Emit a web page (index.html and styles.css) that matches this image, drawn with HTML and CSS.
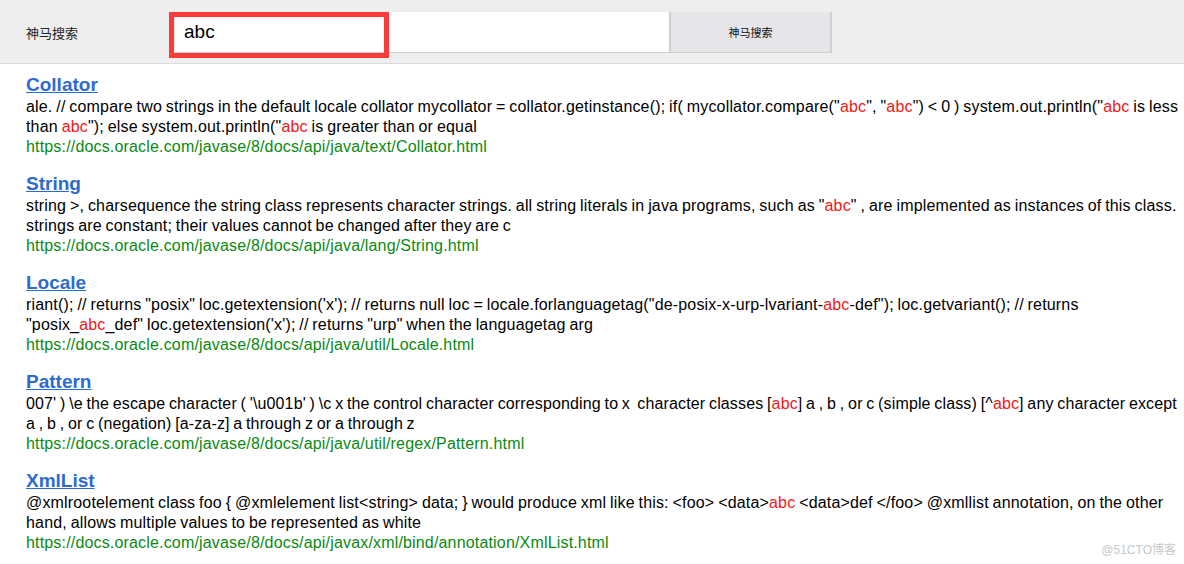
FILE: index.html
```html
<!DOCTYPE html>
<html lang="zh">
<head>
<meta charset="utf-8">
<title>神马搜索</title>
<link rel="stylesheet" href="styles.css">
</head>
<body>
<header class="topbar">
  <span class="brand">神马搜索</span>
  <form class="search">
    <input class="search-input" type="text" value="abc">
    <button class="search-btn" type="button">神马搜索</button>
  </form>
  <div class="highlight-box"></div>
</header>
<main class="results">
  <section class="result">
    <a class="result-title" href="#">Collator</a>
    <p class="result-text">ale. // compare two strings in the default locale collator mycollator = collator.getinstance(); if( mycollator.compare("<em>abc</em>", "<em>abc</em>") &lt; 0 ) system.out.println("<em>abc</em> is less than <em>abc</em>"); else system.out.println("<em>abc</em> is greater than or equal</p>
    <div class="result-url">https://docs.oracle.com/javase/8/docs/api/java/text/Collator.html</div>
  </section>
  <section class="result">
    <a class="result-title" href="#">String</a>
    <p class="result-text">string &gt;, charsequence the string class represents character strings. all string literals in java programs, such as "<em>abc</em>" , are implemented as instances of this class. strings are constant; their values cannot be changed after they are c</p>
    <div class="result-url">https://docs.oracle.com/javase/8/docs/api/java/lang/String.html</div>
  </section>
  <section class="result">
    <a class="result-title" href="#">Locale</a>
    <p class="result-text">riant(); // returns "posix" loc.getextension('x'); // returns null loc = locale.forlanguagetag("de-posix-x-urp-lvariant-<em>abc</em>-def"); loc.getvariant(); // returns "posix_<em>abc</em>_def" loc.getextension('x'); // returns "urp" when the languagetag arg</p>
    <div class="result-url">https://docs.oracle.com/javase/8/docs/api/java/util/Locale.html</div>
  </section>
  <section class="result">
    <a class="result-title" href="#">Pattern</a>
    <p class="result-text result-text--dense">007' ) \e the escape character ( '\u001b' ) \c x the control character corresponding to x&nbsp; character classes [<em>abc</em>] a , b , or c (simple class) [^<em>abc</em>] any character except a , b , or c (negation) [a-za-z] a through z or a through z</p>
    <div class="result-url">https://docs.oracle.com/javase/8/docs/api/java/util/regex/Pattern.html</div>
  </section>
  <section class="result">
    <a class="result-title" href="#">XmlList</a>
    <p class="result-text">@xmlrootelement class foo { @xmlelement list&lt;string&gt; data; } would produce xml like this: &lt;foo&gt; &lt;data&gt;<em>abc</em> &lt;data&gt;def &lt;/foo&gt; @xmllist annotation, on the other hand, allows multiple values to be represented as white</p>
    <div class="result-url">https://docs.oracle.com/javase/8/docs/api/javax/xml/bind/annotation/XmlList.html</div>
  </section>
</main>
<div class="watermark">@51CTO博客</div>
</body>
</html>
```
FILE: styles.css
```css
html, body {
  margin: 0;
  padding: 0;
  background: #ffffff;
}
body {
  font-family: "Liberation Sans", "Noto Sans CJK SC", sans-serif;
  color: #000;
  position: relative;
  width: 1184px;
  height: 564px;
  overflow: hidden;
}
.topbar {
  position: relative;
  height: 63px;
  background: #eeeeee;
  border-bottom: 1px solid #dcdcdc;
  display: flex;
  align-items: flex-start;
}
.brand {
  font-family: "Noto Sans CJK SC", sans-serif;
  font-size: 13px;
  color: #222;
  margin: 24px 0 0 26px;
  width: 149px;
  line-height: 18px;
}
.search {
  display: flex;
  margin: 12px 0 0 0;
  height: 41px;
}
.search-input {
  box-sizing: border-box;
  width: 494px;
  height: 41px;
  border: none;
  border-bottom: 1px solid #cfcfcf;
  background: #fff;
  padding: 0 0 0 9px;
  font-family: "Liberation Sans", sans-serif;
  font-size: 19px;
  color: #000;
  outline: none;
}
.search-btn {
  box-sizing: border-box;
  width: 163px;
  height: 41px;
  background: #e6e6ea;
  border: none;
  border-left: 2px solid #cfcfd2;
  border-right: 2px solid #cfcfd2;
  border-bottom: 1px solid #cfcfcf;
  font-family: "Noto Sans CJK SC", sans-serif;
  font-size: 11px;
  color: #111;
  padding: 0;
}
.highlight-box {
  position: absolute;
  left: 169px;
  top: 12px;
  width: 220px;
  height: 46px;
  box-sizing: border-box;
  border: 5px solid #fe3b3b;
}
.results {
  padding: 9px 0 0 26px;
}
.result {
  margin: 0 0 15px 0;
}
.result-title {
  display: inline-block;
  font-size: 19px;
  font-weight: bold;
  color: #2c6bd2;
  text-decoration: underline;
  line-height: 24px;
}
.result-text {
  margin: 0;
  font-size: 16px;
  line-height: 20px;
  letter-spacing: 0.17px;
  word-spacing: -0.8px;
}
.result-text--dense {
  letter-spacing: 0.14px;
  word-spacing: -0.9px;
}
.result-text em {
  font-style: normal;
  color: #f01818;
}
.result-url {
  font-size: 16px;
  line-height: 20px;
  letter-spacing: 0.17px;
  color: #0a8a12;
}
.watermark {
  position: absolute;
  right: 8px;
  bottom: 7px;
  font-family: "Liberation Sans", "Noto Sans CJK SC", sans-serif;
  font-size: 12px;
  color: #c8c8c8;
}
```
